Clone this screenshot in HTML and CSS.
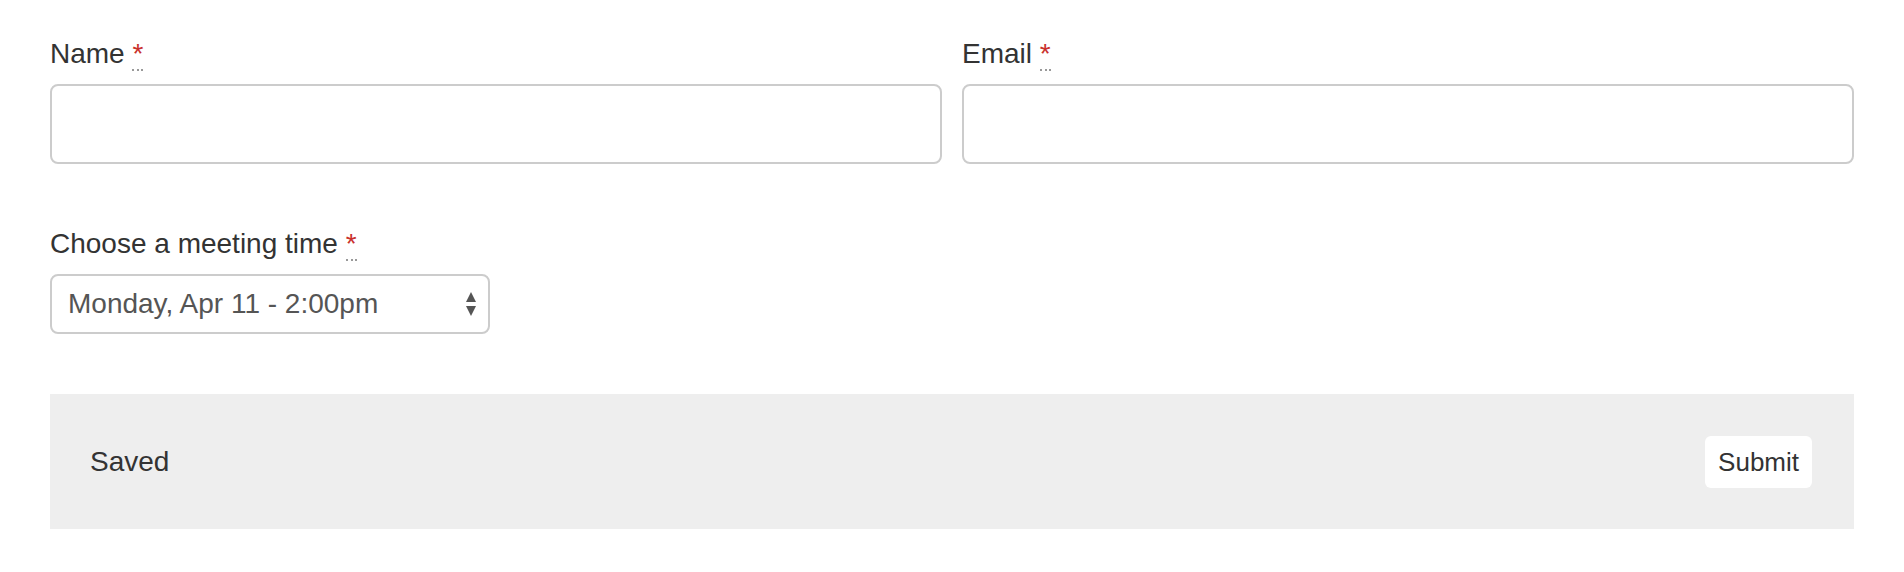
FILE: index.html
```html
<!DOCTYPE html>
<html lang="en">
<head>
    <meta charset="UTF-8">
    <meta name="viewport" content="width=device-width, initial-scale=1.0">
    <title>Meeting Form</title>
    <link rel="stylesheet" href="styles.css">
</head>
<body>

    <form class="meeting-form">
        <div class="row">
            <div class="form-group">
                <label for="name">Name <abbr title="required">*</abbr></label>
                <input type="text" id="name" name="name">
            </div>
            <div class="form-group">
                <label for="email">Email <abbr title="required">*</abbr></label>
                <input type="email" id="email" name="email">
            </div>
        </div>

        <div class="form-group">
            <label for="meeting-time">Choose a meeting time <abbr title="required">*</abbr></label>
            <div class="select-wrap">
                <select id="meeting-time" name="meeting-time">
                    <option>Monday, Apr 11 - 2:00pm</option>
                    <option>Tuesday, Apr 12 - 10:00am</option>
                </select>
                <svg class="select-arrows" width="10" height="24" viewBox="0 0 10 24">
                    <polygon points="5,0 10,10 0,10" fill="#555"/>
                    <polygon points="0,14 10,14 5,24" fill="#555"/>
                </svg>
            </div>
        </div>

        <div class="form-footer">
            <span class="status">Saved</span>
            <button type="submit">Submit</button>
        </div>
    </form>

</body>
</html>
```

FILE: styles.css
```css
body {
    font-family: "Liberation Sans", Arial, sans-serif;
    font-size: 28px;
    line-height: 40px;
    color: #333;
    background: #fff;
    margin: 0;
    padding: 0;
}

.meeting-form {
    padding: 34px 50px;
}

.row {
    display: grid;
    grid-template-columns: 1fr 1fr;
    gap: 20px;
}

.form-group {
    margin-bottom: 60px;
}

label {
    display: block;
    margin-bottom: 10px;
    font-weight: normal;
}

abbr {
    color: #c9302c;
    text-decoration: none;
    border-bottom: 2px dotted #999;
    cursor: help;
}

input {
    display: block;
    width: 100%;
    height: 80px;
    box-sizing: border-box;
    border: 2px solid #ccc;
    border-radius: 8px;
    padding: 0 16px;
    font: inherit;
    color: #555;
    background: #fff;
}

.select-wrap {
    position: relative;
    width: 440px;
}

select {
    display: block;
    width: 100%;
    height: 60px;
    box-sizing: border-box;
    border: 2px solid #ccc;
    border-radius: 8px;
    padding: 0 40px 0 16px;
    font: inherit;
    color: #555;
    background: #fff;
    appearance: none;
    -webkit-appearance: none;
}

.select-arrows {
    position: absolute;
    right: 14px;
    top: 18px;
    pointer-events: none;
}

.form-footer {
    display: flex;
    align-items: center;
    justify-content: space-between;
    background: #eee;
    padding: 42px 42px 41px 40px;
}

button {
    height: 52px;
    padding: 0 13px;
    border: none;
    border-radius: 6px;
    background: #fff;
    color: #333;
    font-family: inherit;
    font-size: 26px;
    cursor: pointer;
}
```
